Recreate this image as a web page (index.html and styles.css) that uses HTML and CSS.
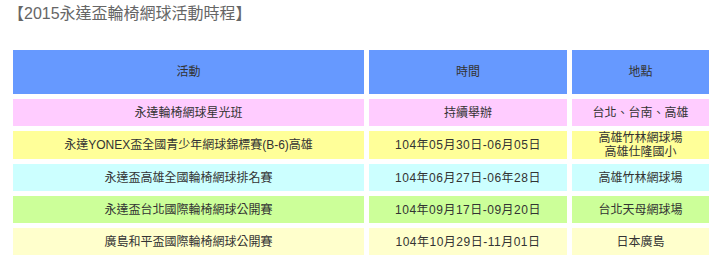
FILE: index.html
```html
<!DOCTYPE html>
<html lang="zh-Hant">
<head>
<meta charset="utf-8">
<title>2015永達盃輪椅網球活動時程</title>
<link rel="stylesheet" href="styles.css">
</head>
<body>
<h1 class="title">【2015永達盃輪椅網球活動時程】</h1>
<table class="schedule">
  <colgroup>
    <col class="c-event">
    <col class="c-time">
    <col class="c-place">
  </colgroup>
  <thead>
    <tr class="head">
      <th>活動</th>
      <th>時間</th>
      <th>地點</th>
    </tr>
  </thead>
  <tbody>
    <tr class="r-pink">
      <td>永達輪椅網球星光班</td>
      <td>持續舉辦</td>
      <td>台北、台南、高雄</td>
    </tr>
    <tr class="r-yellow">
      <td>永達YONEX盃全國青少年網球錦標賽(B-6)高雄</td>
      <td class="date">104年05月30日-06月05日</td>
      <td>高雄竹林網球場<br>高雄仕隆國小</td>
    </tr>
    <tr class="r-cyan">
      <td>永達盃高雄全國輪椅網球排名賽</td>
      <td class="date">104年06月27日-06年28日</td>
      <td>高雄竹林網球場</td>
    </tr>
    <tr class="r-green">
      <td>永達盃台北國際輪椅網球公開賽</td>
      <td class="date">104年09月17日-09月20日</td>
      <td>台北天母網球場</td>
    </tr>
    <tr class="r-cream">
      <td>廣島和平盃國際輪椅網球公開賽</td>
      <td class="date">104年10月29日-11月01日</td>
      <td>日本廣島</td>
    </tr>
  </tbody>
</table>
</body>
</html>
```
FILE: styles.css
```css
body {
  margin: 4px 8px 8px;
  font-family: "Liberation Sans", "Noto Sans CJK TC", sans-serif;
  color: #333;
  background: #fff;
}
.title {
  margin: 0;
  font-size: 16px;
  font-weight: normal;
  line-height: 20px;
  color: #666;
  height: 41px;
}
.schedule {
  width: 706px;
  border-collapse: separate;
  border-spacing: 5px;
  table-layout: fixed;
  font-size: 12px;
  line-height: 14px;
}
.c-event { width: 351px; }
.c-time { width: 198px; }
.c-place { width: 137px; }
.schedule th,
.schedule td {
  padding: 0;
  text-align: center;
  vertical-align: middle;
  font-weight: normal;
  color: #333;
}
.head th {
  height: 44px;
  background: #6699ff;
}
.schedule td {
  height: 27px;
}
.schedule td.date {
  letter-spacing: 0.5px;
}
.r-pink td { background: #ffccff; }
.r-yellow td { background: #ffff99; }
.r-cyan td { background: #ccffff; }
.r-green td { background: #ccff99; }
.r-cream td { background: #ffffcc; }
```
